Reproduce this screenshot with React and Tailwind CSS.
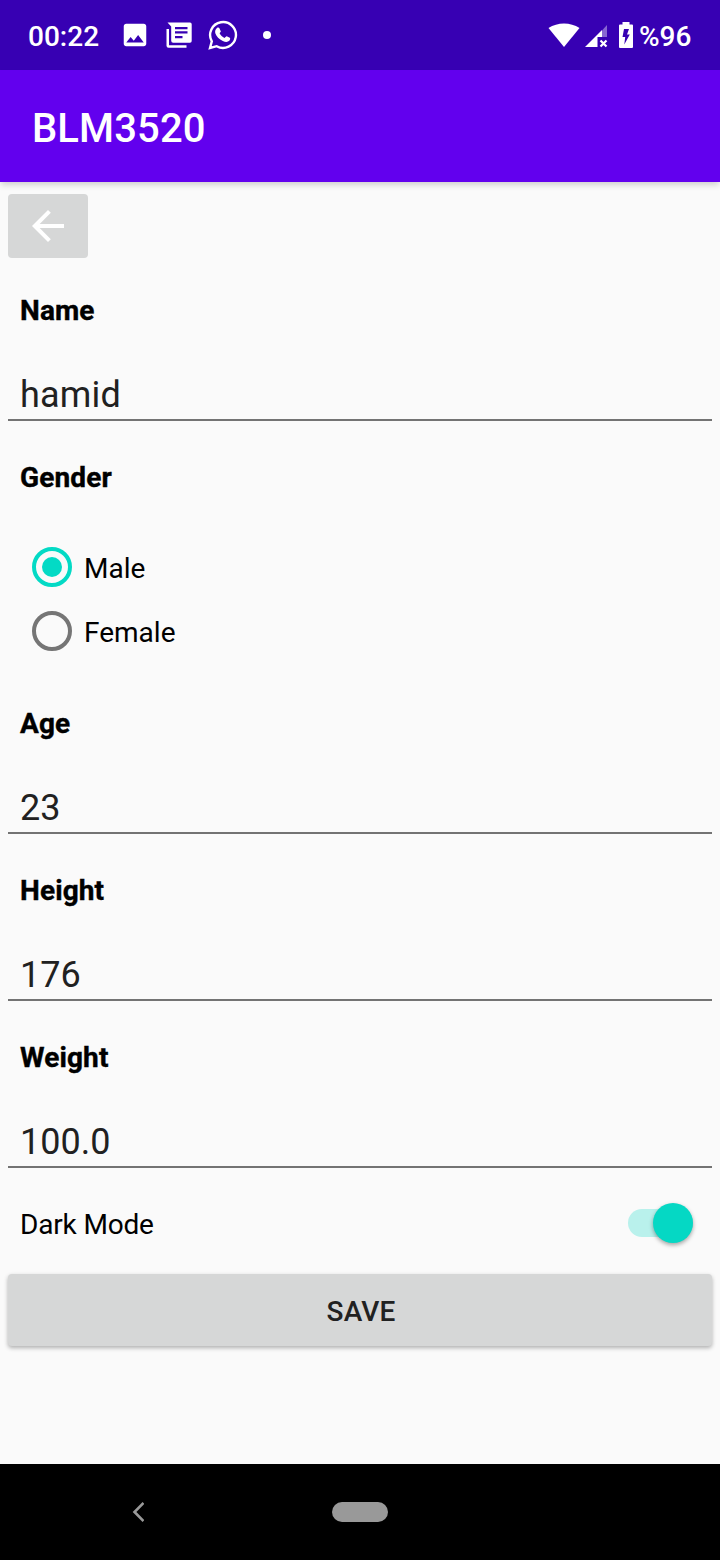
import React from 'react';

function StatusBar() {
  return (
    <div className="flex h-[70px] items-center bg-[#3700b3] pr-7 pl-7 text-white">
      <span className="mt-[2px] w-[71px] text-[28px] leading-[33px] font-medium">00:22</span>
      <svg className="ml-[21px] size-[30px]" viewBox="0 0 24 24" fill="currentColor">
        <path d="M21 19V5c0-1.100-.9-2-2-2H5c-1.100 0-2 .9-2 2v14c0 1.100.9 2 2 2h14c1.100 0 2-.9 2-2zM8.500 13.500l2.500 3.010L14.500 12l4.500 6H5l3.500-4.500z" />
      </svg>
      <svg className="ml-4 size-[26px]" viewBox="0 0 26 26" fill="currentColor">
        <path fillRule="evenodd" d="M1.500 .500H24A1.700 1.700 0 0 1 25.700 2.200V19A1.700 1.700 0 0 1 24 20.700H7.200A2 2 0 0 1 5.200 18.700V4.500ZM9 5V7.300H21.500V5ZM9 9.300V11.600H21.500V9.300ZM9 14V16.300H16.500V14Z" />
        <path d="M.500 7H3V23.300H20.500V25.700H2.500A2 2 0 0 1 .500 23.700Z" />
      </svg>
      <svg className="ml-4 size-[30px]" viewBox="0 0 30 30" fill="none">
        <path d="M2 28 3.800 21.300A12.900 12.900 0 1 1 8.700 26.200Z" stroke="currentColor" strokeWidth="2.400" />
        <path d="M9 8c.7-.7 2-.6 2.400.2l1.400 3c.2.600-.9 1.500-1.200 2.100 1.100 2.300 2.700 3.700 4.900 4.600.6-.2 1.600-1.800 2.200-1.700l3.100 1.600c.8.500.2 2.300-.5 3-1.600 1.600-4.100 1.300-6.500.2-3.600-1.600-6.500-4.700-7.500-7.800-.6-2.100.2-4 1.700-5.200Z" fill="currentColor" />
      </svg>
      <span className="ml-[25px] size-2 rounded-full bg-white" />
      <span className="grow" />
      <svg className="h-[25px] w-8" viewBox="0 0 32 25" fill="currentColor">
        <path d="M.500 5C9.500-1 22.500-1 31.500 5L16 24Z" />
      </svg>
      <svg className="mt-[2px] ml-[5px] h-6 w-[24px]" viewBox="0 0 24 24" fill="currentColor">
        <path fillOpacity=".4" d="M17 6.500 22 1V13H17Z" />
        <path d="M0 23 17 6V13H12.500V23Z" />
        <path d="m15.500 16.500 6 6M21.500 16.500 15.500 22.500" stroke="currentColor" strokeWidth="2.200" fill="none" />
      </svg>
      <svg className="ml-[10px] h-[26px] w-[14px]" viewBox="0 0 14 26" fill="currentColor">
        <path fillRule="evenodd" d="M3.500 0H10.500V2.500H13A1 1 0 0 1 14 3.500V25A1 1 0 0 1 13 26H1A1 1 0 0 1 0 25V3.500A1 1 0 0 1 1 2.500H3.500ZM5 7 3.500 15H6.200L5.300 22.500 10.800 12.500H8L10 7Z" />
      </svg>
      <span className="mt-[2px] ml-[6px] w-[53px] text-[28px] leading-[33px] font-medium">%96</span>
    </div>
  );
}

function Label({ children }) {
  return (
    <div className="pl-5 text-[28px] leading-[33px] font-bold tracking-[0.12px] [-webkit-text-stroke:0.4px_#000]">{children}</div>
  );
}

function Field({ label, value }) {
  return (
    <div className="h-[167px]">
      <Label>{label}</Label>
      <div className="mx-2 mt-[47px] h-[47px] border-b-2 border-[#737373] pl-3 text-[36px] leading-[42px] text-[#212121]">{value}</div>
    </div>
  );
}

function Radio({ label, checked }) {
  return (
    <div className="flex h-16 items-center pl-8">
      <svg className="size-10" viewBox="0 0 40 40">
        <circle cx="20" cy="20" r="18" fill="none" strokeWidth="4" stroke={checked ? '#03dac5' : '#757575'} />
        {checked && <circle cx="20" cy="20" r="10" fill="#03dac5" />}
      </svg>
      <span className="mt-[3px] ml-3 text-[28px] leading-[33px]">{label}</span>
    </div>
  );
}

export default function App() {
  return (
    <div className="flex h-[1560px] w-[720px] flex-col overflow-hidden bg-[#fafafa] font-['Roboto',sans-serif] text-black">
      <StatusBar />
      <header className="flex h-28 shrink-0 items-center bg-[#6200ee] pt-1 pl-8 text-[40px] leading-[47px] font-medium tracking-[0.12px] text-white shadow-[0_4px_6px_-1px_rgba(0,0,0,0.17)]">
        BLM3520
      </header>
      <main className="flex grow flex-col">
        <button className="mt-3 ml-2 flex h-16 w-20 items-center justify-center rounded-[4px] bg-[#d6d7d7]">
          <svg className="size-12" viewBox="0 0 24 24" fill="#fff">
            <path d="M20 11H7.830l5.590-5.590L12 4l-8 8 8 8 1.410-1.410L7.830 13H20v-2z" />
          </svg>
        </button>
        <div className="mt-9">
          <Field label="Name" value={<span className="tracking-[0.2px]">hamid</span>} />
        </div>
        <Label>Gender</Label>
        <div className="mt-[41px] mb-11">
          <Radio label="Male" checked />
          <Radio label="Female" />
        </div>
        <Field label="Age" value="23" />
        <Field label="Height" value="176" />
        <Field label="Weight" value="100.0" />
        <div className="flex h-[33px] items-center justify-between pr-[27px] pl-5">
          <span className="text-[28px] leading-[33px] tracking-[-0.17px]">Dark Mode</span>
          <span className="-mt-[3px] flex h-7 w-[65px] items-center justify-end rounded-full bg-[#b9f1ec]">
            <span className="size-10 shrink-0 rounded-full bg-[#05d8c4] shadow-[0_2px_4px_rgba(0,0,0,0.35)]" />
          </span>
        </div>
        <button className="mx-2 mt-[33px] h-[72px] rounded-[4px] bg-[#d6d7d7] pt-[2px] pl-[2px] text-[28px] leading-[33px] font-medium tracking-[0.15px] text-[#212121] shadow-[0_2px_4px_rgba(0,0,0,0.3)]">
          SAVE
        </button>
      </main>
      <nav className="flex h-24 shrink-0 items-center bg-black pl-[132px]">
        <svg className="h-5 w-3" viewBox="0 0 12 20" fill="none" stroke="#999" strokeWidth="2.600">
          <path d="M11.500 1 2.500 10l9 9" />
        </svg>
        <span className="ml-[188px] h-5 w-14 rounded-full bg-[#999]" />
      </nav>
    </div>
  );
}
